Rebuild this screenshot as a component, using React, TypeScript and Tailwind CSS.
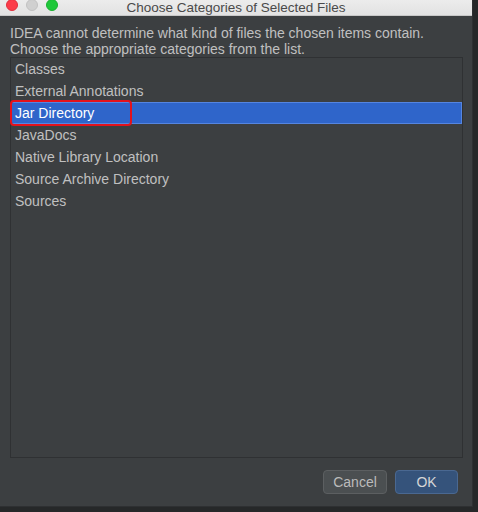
import { useState } from 'react'

const CATEGORIES = [
  'Classes',
  'External Annotations',
  'Jar Directory',
  'JavaDocs',
  'Native Library Location',
  'Source Archive Directory',
  'Sources',
]

export default function App() {
  const [selected, setSelected] = useState('Jar Directory')

  return (
    <div className="w-[478px] h-[512px] bg-[#262829] overflow-hidden font-['Liberation_Sans',Arial,sans-serif]">
      <div className="w-[473px] h-[507px] bg-[#3c3f41] flex flex-col border-r border-b border-[#2e3032]">
        {/* title bar */}
        <div className="relative h-[16px] shrink-0 bg-gradient-to-b from-[#ececec] to-[#e2e2e2] border-b border-[#c8c8c8] overflow-hidden flex items-center justify-center">
          <div className="absolute left-[6px] -top-[1px] flex gap-[8px]">
            <span className="w-[12px] h-[12px] rounded-full bg-[#fc3d4a] border border-[#e0303c]" />
            <span className="w-[12px] h-[12px] rounded-full bg-[#d0d0d0] border border-[#c2c2c2]" />
            <span className="w-[12px] h-[12px] rounded-full bg-[#1fc83a] border border-[#19b02f]" />
          </div>
          <span className="text-[13.5px] leading-[15px] text-[#4a4a4a] -mt-[1px]">Choose Categories of Selected Files</span>
        </div>

        <div className="px-[10px] pt-[9px] text-[14px] leading-[16px] text-[#c0c0c0]">
          <p>IDEA cannot determine what kind of files the chosen items contain.</p>
          <p>Choose the appropriate categories from the list.</p>
        </div>

        <div className="ml-[10px] w-[453px] h-[401px] border border-[#2f3133] bg-[#3c3f41]">
          {CATEGORIES.map(c => (
            <div
              key={c}
              onClick={() => setSelected(c)}
              className={
                c === selected
                  ? 'relative h-[22px] flex items-center pl-[3px] text-[14px] text-white bg-[#2f65ca] border border-[#5585e0]'
                  : 'h-[22px] flex items-center pl-[4px] text-[14px] text-[#c0c0c0]'
              }
            >
              {c}
              {c === selected && (
                <span className="absolute -left-[2px] -top-[3px] w-[122px] h-[26px] border-2 border-[#e3121c] rounded-[4px]" />
              )}
            </div>
          ))}
        </div>

        <div className="flex justify-end gap-[8px] pr-[14px] mt-[12px]">
          <button className="w-[64px] h-[24px] rounded-[4px] bg-[#4b4f51] border border-[#5c5f61] text-[14px] text-[#bbbbbb]">
            Cancel
          </button>
          <button className="w-[63px] h-[24px] rounded-[4px] bg-[#35537b] border border-[#4a6891] text-[14px] text-[#d6d6d6]">
            OK
          </button>
        </div>
      </div>
    </div>
  )
}
